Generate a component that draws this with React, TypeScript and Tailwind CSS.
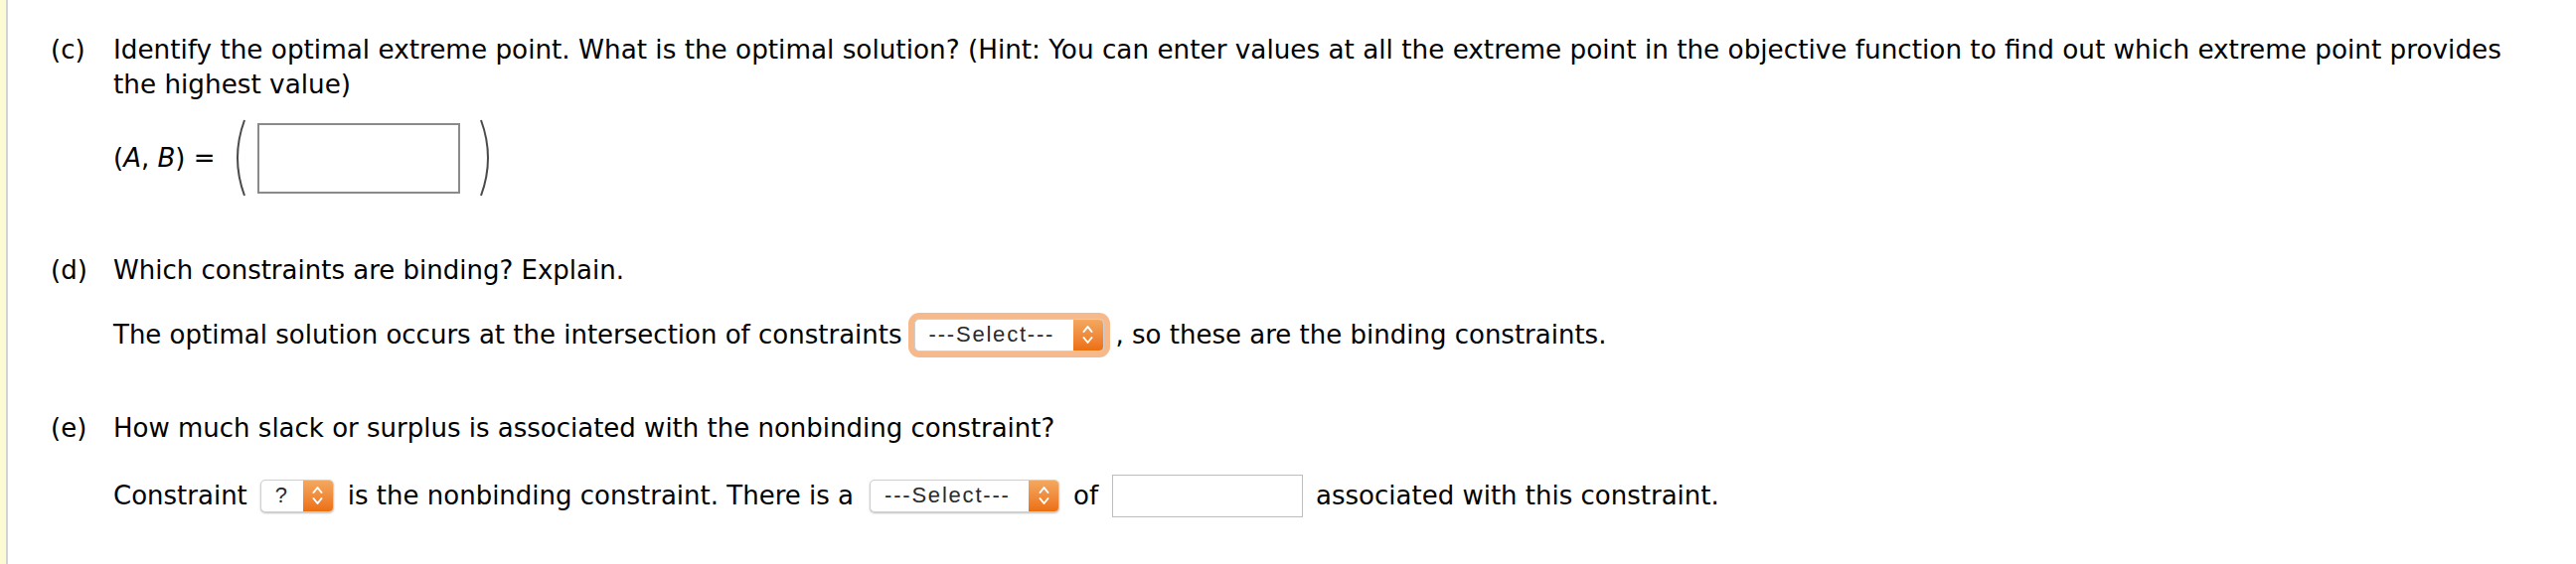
import React from "react";

function Chevrons() {
  return (
    <svg width="13" height="24" viewBox="0 0 13 24" fill="none">
      <path d="M2.5 9 L6.5 4 L10.5 9" stroke="white" strokeWidth="2" strokeLinecap="round" strokeLinejoin="round" />
      <path d="M2.5 15 L6.5 20 L10.5 15" stroke="white" strokeWidth="2" strokeLinecap="round" strokeLinejoin="round" />
    </svg>
  );
}

function SelectBox({ label, wide, focused }: { label: string; wide?: boolean; focused?: boolean }) {
  return (
    <div
      className={
        "flex h-[33px] shrink-0 items-stretch overflow-hidden rounded-[5px] border border-[#cfcfcf] bg-white shadow-[0_1px_2px_rgba(0,0,0,0.25)] " +
        (wide ? "w-[191px] " : "w-[74px] ") +
        (focused ? "ring-[6px] ring-[#f6b98b]" : "")
      }
    >
      <span className="flex flex-1 items-center pl-[14px] font-['Liberation_Sans',sans-serif] text-[22px] leading-none tracking-[1.8px] text-[#2a2a2a]">
        {label}
      </span>
      <span className="flex w-[30px] items-center justify-center bg-gradient-to-b from-[#f3a85e] to-[#ec6f0b]">
        <Chevrons />
      </span>
    </div>
  );
}

function Paren({ right }: { right?: boolean }) {
  return (
    <svg width="18" height="78" viewBox="0 0 18 78" fill="none" className="shrink-0">
      <path
        d={right ? "M3 1 Q17 39 3 77" : "M15 1 Q1 39 15 77"}
        stroke="#4a4a4a"
        strokeWidth="2"
      />
    </svg>
  );
}

export default function App() {
  return (
    <div className="flex min-h-[568px] bg-white font-['DejaVu_Sans',sans-serif] text-[26px] leading-[34px] text-black">
      <div className="w-[6px] shrink-0 bg-[#fdfbd3]" />
      <div className="w-[2px] shrink-0 bg-[#d3d3d3]" />
      <div className="flex-1 pl-[43px] pt-[33px]">
        {/* (c) */}
        <div className="flex">
          <div className="w-[63px] shrink-0">(c)</div>
          <div>
            <p className="text-[26.25px] leading-[35px]">
              Identify the optimal extreme point. What is the optimal solution? (Hint: You can enter values at all
              the extreme point in the objective function to find out which extreme point provides
              <br />
              the highest value)
            </p>
            <div className="mt-[17px] flex h-[78px] items-center">
              <span>
                (<i>A</i>, <i>B</i>) =
              </span>
              <span className="ml-[14px]">
                <Paren />
              </span>
              <div className="ml-[10px] h-[71px] w-[204px] border-2 border-[#8a8a8a] bg-white" />
              <span className="ml-[18px]">
                <Paren right />
              </span>
            </div>
          </div>
        </div>

        {/* (d) */}
        <div className="mt-[57px] flex">
          <div className="w-[63px] shrink-0">(d)</div>
          <div>
            <p>Which constraints are binding? Explain.</p>
            <div className="mt-[23px] flex h-[50px] items-center">
              <span>The optimal solution occurs at the intersection of constraints</span>
              <span className="ml-[12px] mr-[12px]">
                <SelectBox label="---Select---" wide focused />
              </span>
              <span>, so these are the binding constraints.</span>
            </div>
          </div>
        </div>

        {/* (e) */}
        <div className="mt-[52px] flex">
          <div className="w-[63px] shrink-0">(e)</div>
          <div>
            <p>How much slack or surplus is associated with the nonbinding constraint?</p>
            <div className="mt-[26px] flex h-[50px] items-center">
              <span>Constraint</span>
              <span className="ml-[13px] mr-[14px]">
                <SelectBox label="?" />
              </span>
              <span>is the nonbinding constraint. There is a</span>
              <span className="ml-[16px] mr-[14px]">
                <SelectBox label="---Select---" wide />
              </span>
              <span>of</span>
              <div className="ml-[14px] mr-[13px] h-[43px] w-[192px] shrink-0 border border-[#bdbdbd] bg-white" />
              <span>associated with this constraint.</span>
            </div>
          </div>
        </div>
      </div>
    </div>
  );
}
